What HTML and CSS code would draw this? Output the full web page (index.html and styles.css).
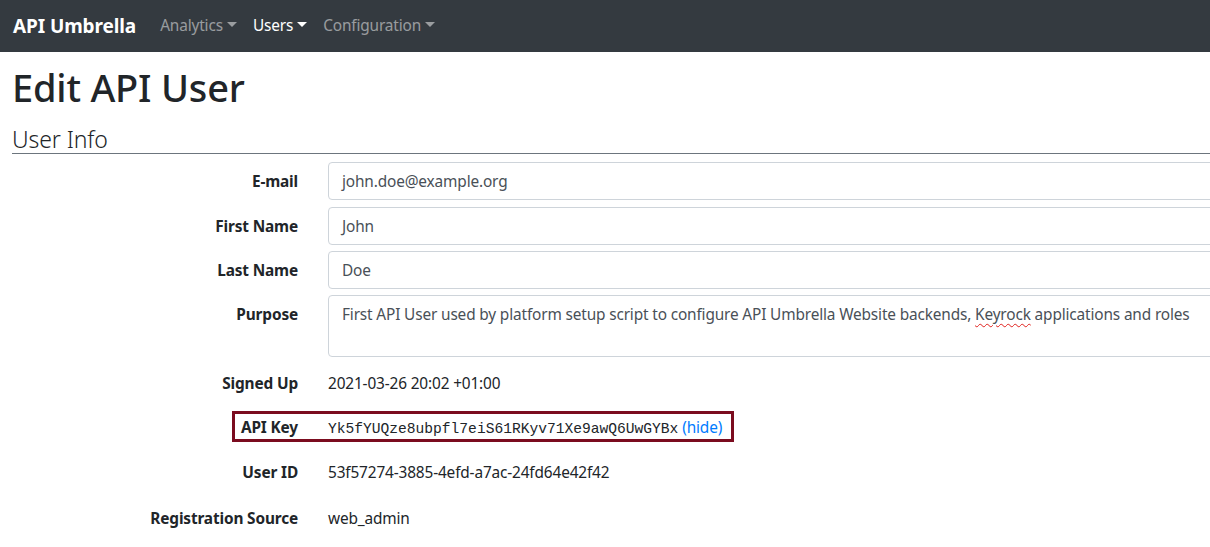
FILE: index.html
```html
<!DOCTYPE html>
<html lang="en">
<head>
<meta charset="utf-8">
<title>Edit API User</title>
<link rel="stylesheet" href="styles.css">
</head>
<body>
<nav class="navbar">
  <a class="brand" href="#">API Umbrella</a>
  <ul class="nav">
    <li><a class="nav-link" href="#">Analytics<span class="caret"></span></a></li>
    <li><a class="nav-link active" href="#">Users<span class="caret"></span></a></li>
    <li><a class="nav-link" href="#">Configuration<span class="caret"></span></a></li>
  </ul>
</nav>
<main class="page">
  <h1 class="title">Edit API User</h1>
  <fieldset class="section">
    <legend class="legend">User Info</legend>
    <div class="rows">
      <div class="row">
        <label class="label">E-mail</label>
        <div class="control">john.doe@example.org</div>
      </div>
      <div class="row plus1">
        <label class="label">First Name</label>
        <div class="control">John</div>
      </div>
      <div class="row">
        <label class="label">Last Name</label>
        <div class="control">Doe</div>
      </div>
      <div class="row">
        <label class="label">Purpose</label>
        <div class="control area">First API User used by platform setup script to configure API Umbrella Website backends, <span class="spell">Keyrock</span> applications and roles</div>
      </div>
      <div class="row plus1">
        <span class="label">Signed Up</span>
        <div class="plain">2021-03-26 20:02 +01:00</div>
      </div>
      <div class="row key-row">
        <span class="label">API Key</span>
        <div class="plain"><code class="key">Yk5fYUQze8ubpfl7eiS61RKyv71Xe9awQ6UwGYBx</code> <a class="link" href="#">(hide)</a></div>
        <div class="highlight"></div>
      </div>
      <div class="row">
        <span class="label">User ID</span>
        <div class="plain">53f57274-3885-4efd-a7ac-24fd64e42f42</div>
      </div>
      <div class="row plus2">
        <span class="label">Registration Source</span>
        <div class="plain">web_admin</div>
      </div>
    </div>
  </fieldset>
</main>
</body>
</html>
```
FILE: styles.css
```css
html, body {
  margin: 0;
  padding: 0;
}
body {
  font-family: "Noto Sans", "Open Sans", sans-serif;
  font-size: 15.4px;
  letter-spacing: -0.15px;
  line-height: 1.5;
  color: #212529;
  background: #fff;
  overflow: hidden;
  width: 1210px;
  height: 547px;
}
.navbar {
  height: 52px;
  background: #343a40;
  display: flex;
  align-items: center;
  padding: 0 13px;
  box-sizing: border-box;
}
.brand {
  color: #fff;
  font-weight: 700;
  font-size: 19px;
  letter-spacing: -0.1px;
  text-decoration: none;
  margin-right: 24px;
}
.nav {
  display: flex;
  list-style: none;
  margin: 0;
  padding: 0;
  gap: 16px;
}
.nav-link {
  color: rgba(255, 255, 255, 0.5);
  text-decoration: none;
}
.nav-link.active {
  color: #fff;
}
.caret {
  display: inline-block;
  margin-left: 4px;
  vertical-align: 4px;
  border-top: 5px solid;
  border-left: 5px solid transparent;
  border-right: 5px solid transparent;
}
.page {
  width: 1400px;
  padding: 0 0 0 12px;
}
.title {
  font-size: 38px;
  font-weight: 500;
  letter-spacing: -0.2px;
  line-height: 1.2;
  margin: 13px 0 15px;
}
.section {
  border: 0;
  margin: 0;
  padding: 0;
}
.legend {
  font-size: 23px;
  font-weight: 300;
  letter-spacing: -0.1px;
  line-height: 1.2;
  padding: 0;
  width: 100%;
  border-bottom: 1px solid #6c757d;
  margin-bottom: 8px;
}
.rows {
  display: flex;
  flex-direction: column;
  gap: 6px;
}
.row {
  display: grid;
  grid-template-columns: 286px 1fr;
  column-gap: 30px;
  position: relative;
}
.row.plus1 {
  margin-top: 1px;
}
.row.plus2 {
  margin-top: 2px;
}
.label {
  text-align: right;
  font-weight: 700;
  padding-top: 8px;
  line-height: 24px;
}
.control {
  border: 1px solid #ced4da;
  border-radius: 4px;
  height: 38px;
  box-sizing: border-box;
  padding: 7px 13px 5px;
  line-height: 24px;
  color: #495057;
  white-space: nowrap;
}
.control.area {
  height: 62px;
}
.spell {
  text-decoration: underline wavy #e0201c;
  text-decoration-thickness: 1px;
  text-underline-offset: 3px;
}
.plain {
  padding: 8px 0 6px;
  line-height: 24px;
}
.key {
  font-family: "Liberation Mono", "DejaVu Sans Mono", monospace;
  font-size: 14.6px;
  letter-spacing: 0;
  color: #212529;
}
.link {
  color: #007bff;
  text-decoration: none;
}
.highlight {
  position: absolute;
  left: 220px;
  top: 3px;
  width: 502px;
  height: 31px;
  box-sizing: border-box;
  border: 3px solid #7b0c1f;
  pointer-events: none;
}
```
